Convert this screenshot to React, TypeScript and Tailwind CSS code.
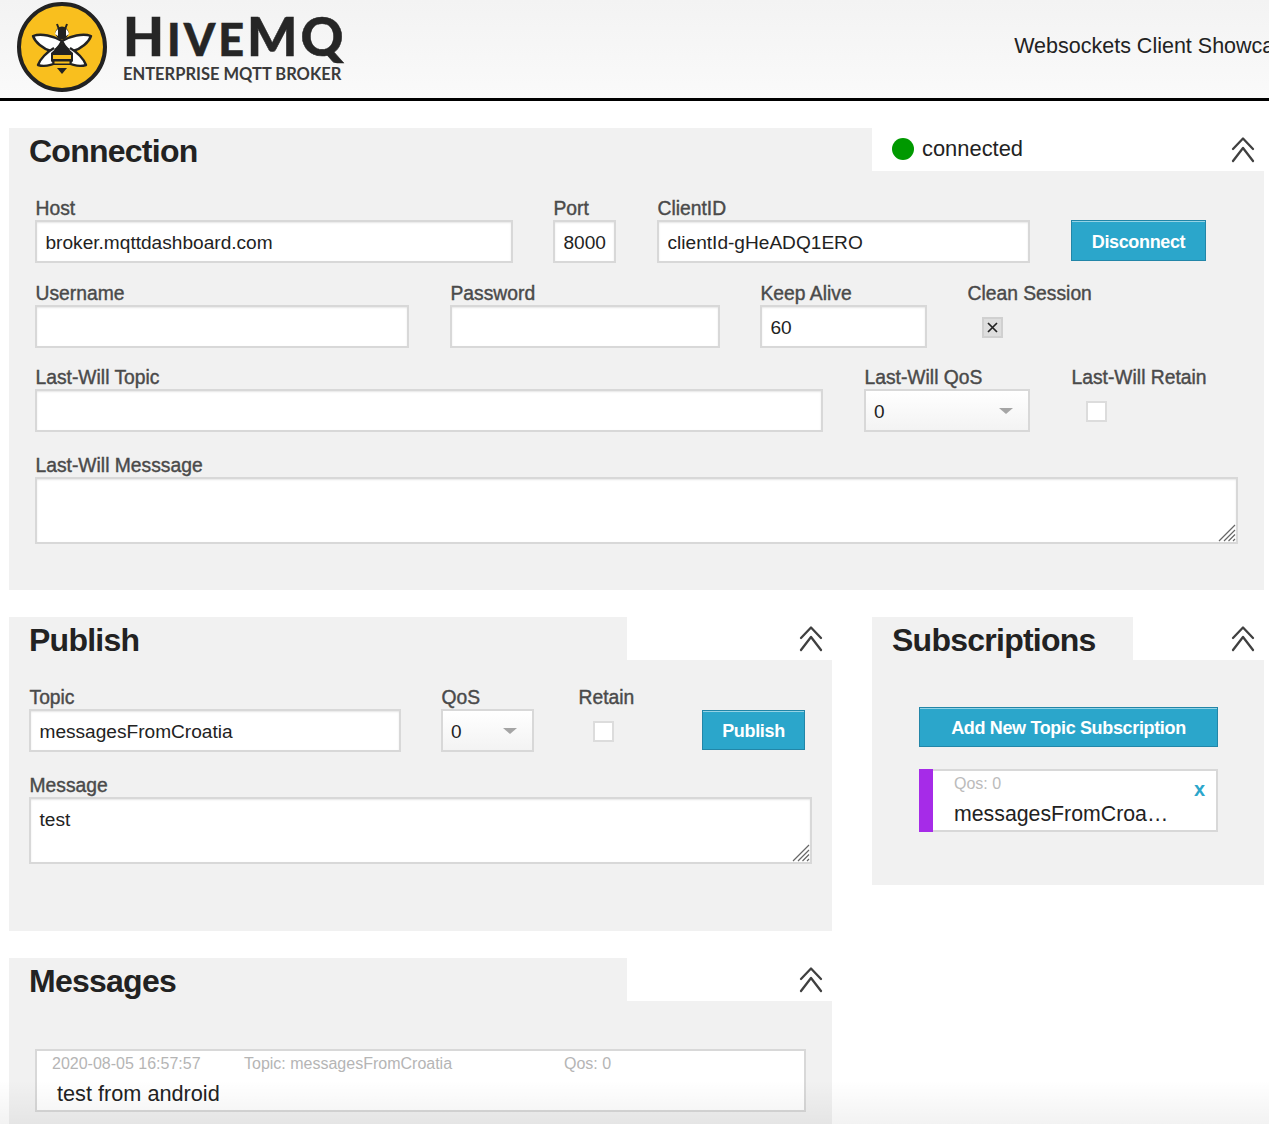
const sans = "font-['Liberation_Sans',Arial,sans-serif]";

function Chevrons() {
  return (
    <svg width="26" height="28" viewBox="0 0 26 28" fill="none" stroke="#404040" strokeWidth="2.3" strokeLinecap="round" strokeLinejoin="round">
      <path d="M3 13 13 2.5 23 13" />
      <path d="M3 25 13 12 23 25" />
    </svg>
  );
}

function Label({ children, className = "" }: { children: React.ReactNode; className?: string }) {
  return <div className={`h-[24px] whitespace-nowrap pl-[0.5px] text-[19.3px] leading-[26px] text-[#4a4a4a] [-webkit-text-stroke:0.4px_#4a4a4a] ${className}`}>{children}</div>;
}

function Input({ value = "", className = "" }: { value?: string; className?: string }) {
  return (
    <input
      readOnly
      value={value}
      className={`block h-[43px] border-2 border-[#d8d8d8] bg-white pl-[8.5px] pt-[2px] text-[19.1px] text-[#222] shadow-[inset_0_1px_2px_rgba(0,0,0,0.1)] outline-none ${className}`}
    />
  );
}

function Select({ className = "" }: { className?: string }) {
  return (
    <div className={`flex h-[43px] items-center justify-between border-2 border-[#d8d8d8] bg-gradient-to-b from-white to-[#f3f3f3] pl-[8px] pr-[15px] text-[19px] text-[#222] ${className}`}>
      <span className="pt-[4px]">0</span>
      <span className="h-0 w-0 border-x-[7px] border-t-[6px] border-x-transparent border-t-[#a5a5a5]" />
    </div>
  );
}

function Checkbox({ checked = false, className = "" }: { checked?: boolean; className?: string }) {
  return (
    <div className={`flex h-[21px] w-[21px] items-center justify-center border-2 ${checked ? "border-[#d0d0d0] bg-[#dedede]" : "border-[#dcdcdc] bg-white"} ${className}`}>
      {checked && (
        <svg width="11" height="11" viewBox="0 0 11 11" stroke="#222" strokeWidth="1.7">
          <path d="M1 1 10 10M10 1 1 10" />
        </svg>
      )}
    </div>
  );
}

function TextArea({ value = "", className = "" }: { value?: string; className?: string }) {
  return (
    <div className={`relative ${className}`}>
      <textarea
        readOnly
        value={value}
        className="block h-full w-full resize-none border-2 border-[#d8d8d8] bg-white px-[8.5px] pt-[9px] text-[19.1px] leading-[24px] text-[#222] shadow-[inset_0_1px_2px_rgba(0,0,0,0.1)] outline-none"
      />
      <svg className="absolute bottom-[2px] right-[2px]" width="18" height="18" viewBox="0 0 18 18" stroke="#666" strokeWidth="1.2">
        <path d="M1 17 17 1M6 17 17 6M10.5 17 17 10.5M15 17 17 15" />
      </svg>
    </div>
  );
}

function Button({ children, className = "" }: { children: React.ReactNode; className?: string }) {
  return (
    <button className={`flex items-center justify-center border border-[#2286a8] bg-[#2ba6cb] pt-[3px] text-[18px] font-bold tracking-[-0.35px] text-white shadow-[inset_0_1px_0_rgba(255,255,255,0.5)] ${className}`}>
      {children}
    </button>
  );
}

function PanelHead({ title, tabWidth, children }: { title: string; tabWidth: string; children?: React.ReactNode }) {
  return (
    <div className="flex h-[43px]">
      <h2 className={`bg-[#f1f1f1] pl-[20px] text-[32px] font-bold leading-[46px] tracking-[-0.75px] text-[#222] ${tabWidth}`}>{title}</h2>
      <div className="flex flex-1 items-center justify-between bg-white pl-[20px] pr-[8px]">
        <div className="flex items-center">{children}</div>
        <Chevrons />
      </div>
    </div>
  );
}

function Logo() {
  return (
    <svg width="92" height="92" viewBox="0 0 92 92" className="shrink-0">
      <circle cx="46" cy="46" r="43" fill="#f9bf1e" stroke="#222" strokeWidth="4" />
      <g stroke="#222" strokeWidth="2.4" fill="#fff" strokeLinejoin="round">
        <path d="M46 40C38 35 25 32 17 35c2 6 10 13 18 15 4 0 8-4 11-10z" />
        <path d="M46 40c8-5 21-8 29-5-2 6-10 13-18 15-4 0-8-4-11-10z" />
        <path d="M38 47C31 51 24 58 22 64c6 2 14 0 20-3" />
        <path d="M54 47c7 4 14 11 16 17-6 2-14 0-20-3" />
      </g>
      <path d="M41 23l1.5 4M51 23l-1.5 4" stroke="#222" strokeWidth="2" />
      <circle cx="46" cy="32" r="6.5" fill="#222" />
      <path d="M39 33a7 7 0 0 1 3-5v7zM53 33a7 7 0 0 0-3-5v7z" fill="#fff" />
      <path d="M46 42 57 52v8l-3 4H38l-3-4v-8z" fill="#222" />
      <path d="M37 54h18v4H37zM38.5 60.500h15v2h-15z" fill="#f9bf1e" />
      <path d="M41 67h10l-5 6z" fill="#222" />
    </svg>
  );
}

export default function App() {
  return (
    <div className={`relative h-[1124px] w-[1269px] overflow-hidden bg-white ${sans}`}>
      <header className="flex h-[101px] items-start justify-between border-b-[3px] border-black bg-gradient-to-b from-[#f3f3f3] to-[#fafafa] pl-[16px]">
        <div className="flex items-center pt-px">
          <Logo />
          <div className="ml-[15px] font-['Lato',sans-serif] text-[#262626]">
            <div className="mt-[1px] h-[48px] whitespace-nowrap text-[53px] font-black leading-[50px] tracking-[3px] [-webkit-text-stroke:0.5px_#262626]">
              H<span className="text-[45px]">IVE</span>MQ
            </div>
            <div className="mt-[5px] whitespace-nowrap text-[16.5px] font-bold leading-[20px] text-[#3b3b3b]">ENTERPRISE MQTT BROKER</div>
          </div>
        </div>
        <div className="mr-[-28px] whitespace-nowrap pt-[30px] text-[21.5px] text-[#222]">Websockets Client Showcase</div>
      </header>

      <main className="pl-[9px] pr-[5px] pt-[27px]">
        <section>
          <PanelHead title="Connection" tabWidth="w-[863px]">
            <span className="h-[22px] w-[22px] rounded-full bg-[#009900]" />
            <span className="ml-[8px] text-[21.9px] text-[#222]">connected</span>
          </PanelHead>
          <div className="h-[419px] bg-[#f1f1f1] pl-[26px] pt-[25px]">
            <div className="flex">
              <div>
                <Label>Host</Label>
                <Input value="broker.mqttdashboard.com" className="w-[478px]" />
              </div>
              <div className="ml-[40px]">
                <Label>Port</Label>
                <Input value="8000" className="w-[63px]" />
              </div>
              <div className="ml-[41px]">
                <Label>ClientID</Label>
                <Input value="clientId-gHeADQ1ERO" className="w-[373px]" />
              </div>
              <Button className="ml-[41px] mt-[24px] h-[41px] w-[135px]">Disconnect</Button>
            </div>
            <div className="mt-[18px] flex">
              <div>
                <Label>Username</Label>
                <Input className="w-[374px]" />
              </div>
              <div className="ml-[41px]">
                <Label>Password</Label>
                <Input className="w-[270px]" />
              </div>
              <div className="ml-[40px]">
                <Label>Keep Alive</Label>
                <Input value="60" className="w-[167px]" />
              </div>
              <div className="ml-[40px]">
                <Label>Clean Session</Label>
                <Checkbox checked className="ml-[15px] mt-[12px]" />
              </div>
            </div>
            <div className="mt-[17px] flex">
              <div>
                <Label>Last-Will Topic</Label>
                <Input className="w-[788px]" />
              </div>
              <div className="ml-[41px]">
                <Label>Last-Will QoS</Label>
                <Select className="w-[166px]" />
              </div>
              <div className="ml-[41px]">
                <Label>Last-Will Retain</Label>
                <Checkbox className="ml-[15px] mt-[12px]" />
              </div>
            </div>
            <Label className="mt-[21px]">Last-Will Messsage</Label>
            <TextArea className="h-[67px] w-[1203px]" />
          </div>
        </section>

        <div className="mt-[27px] flex items-start">
          <div className="w-[823px]">
            <section>
              <PanelHead title="Publish" tabWidth="w-[618px]" />
              <div className="h-[271px] bg-[#f1f1f1] pl-[20px] pt-[25px]">
                <div className="flex">
                  <div>
                    <Label>Topic</Label>
                    <Input value="messagesFromCroatia" className="w-[372px]" />
                  </div>
                  <div className="ml-[40px]">
                    <Label>QoS</Label>
                    <Select className="w-[93px]" />
                  </div>
                  <div className="ml-[44px] w-[124px]">
                    <Label>Retain</Label>
                    <Checkbox className="ml-[15px] mt-[12px]" />
                  </div>
                  <Button className="mt-[25px] h-[40px] w-[103px]">Publish</Button>
                </div>
                <Label className="mt-[21px]">Message</Label>
                <TextArea value="test" className="h-[67px] w-[783px]" />
              </div>
            </section>
            <section className="mt-[27px]">
              <PanelHead title="Messages" tabWidth="w-[618px]" />
              <div className="h-[180px] bg-[#f1f1f1] pl-[26px] pt-[48px]">
                <div className="h-[63px] w-[771px] border-2 border-[#d8d8d8] bg-white pl-[15px]">
                  <div className="flex h-[25px] items-center text-[16px] text-[#b5b5b5]">
                    <span className="w-[192px]">2020-08-05 16:57:57</span>
                    <span className="w-[320px]">Topic: messagesFromCroatia</span>
                    <span>Qos: 0</span>
                  </div>
                  <div className="pl-[5px] pt-[5px] text-[21.7px] leading-[26px] text-[#222]">test from android</div>
                </div>
              </div>
            </section>
          </div>
          <section className="ml-[40px] w-[392px]">
            <PanelHead title="Subscriptions" tabWidth="w-[261px]" />
            <div className="h-[225px] bg-[#f1f1f1] pl-[47px] pt-[47px]">
              <Button className="h-[40px] w-[299px]">Add New Topic Subscription</Button>
              <div className="mt-[22px] flex h-[63px] w-[299px]">
                <div className="w-[14px] shrink-0 bg-[#a62be8]" />
                <div className="min-w-0 flex-1 border-2 border-l-0 border-[#d8d8d8] bg-white pl-[21px]">
                  <div className="flex justify-between pr-[11px]">
                    <span className="pt-[3px] text-[16px] leading-[20px] text-[#bbb]">Qos: 0</span>
                    <span className="pt-[8px] text-[20px] font-bold leading-[20px] text-[#2ba6cb]">x</span>
                  </div>
                  <div className="whitespace-nowrap pt-[2px] text-[21.3px] leading-[26px] text-[#222]">messagesFromCroa…</div>
                </div>
              </div>
            </div>
          </section>
        </div>
      </main>
      <div className="pointer-events-none absolute inset-x-0 bottom-0 h-[44px] bg-gradient-to-b from-transparent to-[#000]/[0.05]" />
    </div>
  );
}
